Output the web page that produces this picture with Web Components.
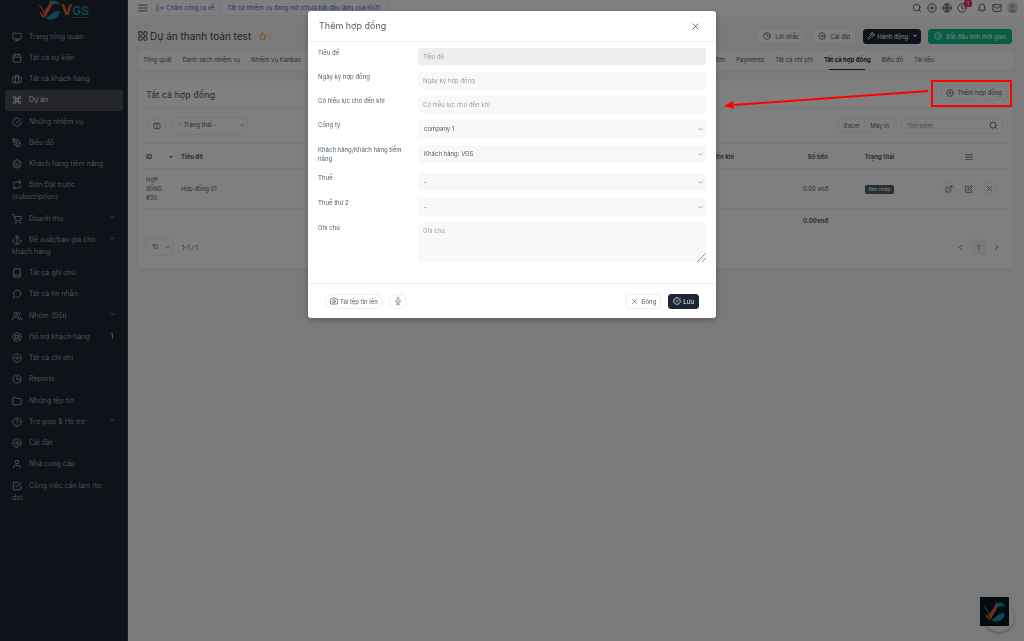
<!DOCTYPE html>
<html lang="vi">
<head>
<meta charset="utf-8">
<title>Dự án thanh toán test</title>
<style>
html,body{margin:0;height:100%}
body{font:6px/9px Inter,"Liberation Sans",sans-serif;color:#4e5e6a;background:#f5f5f5;overflow:hidden}
</style>
</head>
<body>
<crm-app></crm-app>
<script>
const P = (...d) => d.map(x => `<path d="${x}"/>`).join('');
const C = (x, y, r) => `<circle cx="${x}" cy="${y}" r="${r}"/>`;
const R = (x, y, w, h, r) => `<rect x="${x}" y="${y}" width="${w}" height="${h}" rx="${r}"/>`;
const ICONS = {
  monitor: R(2,3,20,14,2) + P('M8 21h8M12 17v4'),
  calendar: R(3,4,18,18,2) + P('M16 2v4M8 2v4M3 10h18'),
  briefcase: R(2,7,20,14,2) + P('M16 21V5a2 2 0 0 0-2-2h-4a2 2 0 0 0-2 2v16'),
  command: P('M18 3a3 3 0 0 0-3 3v12a3 3 0 1 0 3-3H6a3 3 0 1 0 3 3V6a3 3 0 1 0-3 3h12a3 3 0 1 0 0-6z'),
  checkCircle: P('M22 11.08V12a10 10 0 1 1-5.93-9.14', 'M22 4L12 14.01l-3-3'),
  pen: P('M12 19l7-7 3 3-7 7-3-3z', 'M18 13l-1.5-7.5L2 2l3.5 14.5L13 18l5-5z', 'M2 2l7.586 7.586') + C(11,11,2),
  layers: P('M12 2L2 7l10 5 10-5-10-5z', 'M2 17l10 5 10-5', 'M2 12l10 5 10-5'),
  repeat: P('M17 1l4 4-4 4', 'M3 11V9a4 4 0 0 1 4-4h14', 'M7 23l-4-4 4-4', 'M21 13v2a4 4 0 0 1-4 4H3'),
  cart: C(9,21,1) + C(20,21,1) + P('M1 1h4l2.68 13.39a2 2 0 0 0 2 1.61h9.72a2 2 0 0 0 2-1.61L23 6H6'),
  anchor: C(12,5,3) + P('M12 22V8', 'M5 12H2a10 10 0 0 0 20 0h-3'),
  book: P('M4 19.5A2.5 2.5 0 0 1 6.5 17H20', 'M6.5 2H20v20H6.5A2.5 2.5 0 0 1 4 19.5v-15A2.5 2.5 0 0 1 6.5 2z'),
  message: P('M21 11.5a8.38 8.38 0 0 1-.9 3.8 8.5 8.5 0 0 1-7.6 4.7 8.38 8.38 0 0 1-3.8-.9L3 21l1.9-5.7a8.38 8.38 0 0 1-.9-3.8 8.5 8.5 0 0 1 4.7-7.6 8.38 8.38 0 0 1 3.8-.9h.5a8.48 8.48 0 0 1 8 8v.5z'),
  users: P('M17 21v-2a4 4 0 0 0-4-4H5a4 4 0 0 0-4 4v2', 'M23 21v-2a4 4 0 0 0-3-3.87', 'M16 3.13a4 4 0 0 1 0 7.75') + C(9,7,4),
  buoy: C(12,12,10) + C(12,12,4) + P('M4.93 4.93l4.24 4.24M14.83 14.83l4.24 4.24M14.83 9.17l4.24-4.24M4.93 19.07l4.24-4.24'),
  arrowCircle: C(12,12,10) + P('M12 16l4-4-4-4M8 12h8'),
  pie: P('M21.21 15.89A10 10 0 1 1 8 2.83', 'M22 12A10 10 0 0 0 12 2v10z'),
  folder: P('M22 19a2 2 0 0 1-2 2H4a2 2 0 0 1-2-2V5a2 2 0 0 1 2-2h5l2 3h9a2 2 0 0 1 2 2z'),
  help: C(12,12,10) + P('M9.09 9a3 3 0 0 1 5.83 1c0 2-3 3-3 3M12 17h.01'),
  settings: C(12,12,3) + P('M19.4 15a1.65 1.65 0 0 0 .33 1.82l.06.06a2 2 0 1 1-2.83 2.83l-.06-.06a1.65 1.65 0 0 0-1.82-.33 1.65 1.65 0 0 0-1 1.51V21a2 2 0 0 1-4 0v-.09A1.65 1.65 0 0 0 9 19.4a1.65 1.65 0 0 0-1.82.33l-.06.06a2 2 0 1 1-2.83-2.83l.06-.06a1.65 1.65 0 0 0 .33-1.82 1.65 1.65 0 0 0-1.51-1H3a2 2 0 0 1 0-4h.09A1.65 1.65 0 0 0 4.6 9a1.65 1.65 0 0 0-.33-1.82l-.06-.06a2 2 0 1 1 2.83-2.83l.06.06a1.65 1.65 0 0 0 1.82.33H9a1.65 1.65 0 0 0 1-1.51V3a2 2 0 0 1 4 0v.09a1.65 1.65 0 0 0 1 1.51 1.65 1.65 0 0 0 1.82-.33l.06-.06a2 2 0 1 1 2.83 2.83l-.06.06a1.65 1.65 0 0 0-.33 1.82V9a1.65 1.65 0 0 0 1.51 1H21a2 2 0 0 1 0 4h-.09a1.65 1.65 0 0 0-1.51 1z'),
  user: P('M20 21v-2a4 4 0 0 0-4-4H8a4 4 0 0 0-4 4v2') + C(12,7,4),
  checkSquare: P('M9 11l3 3L22 4', 'M21 12v7a2 2 0 0 1-2 2H5a2 2 0 0 1-2-2V5a2 2 0 0 1 2-2h11'),
  down: P('M5 8l7 7 7-7'),
  left: P('M15 5l-7 7 7 7'),
  right: P('M9 5l7 7-7 7'),
  menu: P('M2 5h20M2 12h20M2 19h20'),
  logout: P('M8 3H6a3 3 0 0 0-3 3v12a3 3 0 0 0 3 3h2', 'M9 12h13M17 7l5 5-5 5'),
  grid: R(2,2,8,8,1) + R(14,2,8,8,1) + R(14,14,8,8,1) + R(2,14,8,8,1),
  star: P('M12 2l3.09 6.26L22 9.27l-5 4.87 1.18 6.88L12 17.77l-6.18 3.25L7 14.14 2 9.27l6.91-1.01z'),
  search: C(11,11,8) + P('M21 21l-4.35-4.35'),
  plus: C(12,12,10) + P('M12 8v8M8 12h8'),
  globe: C(12,12,10) + P('M2 12h20M12 2a15 15 0 0 1 4 10 15 15 0 0 1-4 10 15 15 0 0 1-4-10 15 15 0 0 1 4-10zM12 2v20'),
  clock: C(12,12,10) + P('M12 6v6l4 2'),
  bell: P('M18 8A6 6 0 0 0 6 8c0 7-3 9-3 9h18s-3-2-3-9', 'M13.73 21a2 2 0 0 1-3.46 0'),
  mail: R(2,4,20,16,2) + P('M22 6l-10 7L2 6'),
  tool: P('M14.7 6.3a1 1 0 0 0 0 1.4l1.6 1.6a1 1 0 0 0 1.4 0l3.77-3.77a6 6 0 0 1-7.94 7.94l-6.91 6.91a2.12 2.12 0 0 1-3-3l6.91-6.91a6 6 0 0 1 7.94-7.94l-3.76 3.76z'),
  columns: R(3,4,18,16,2) + P('M12 4v16'),
  external: P('M18 13v6a2 2 0 0 1-2 2H5a2 2 0 0 1-2-2V8a2 2 0 0 1 2-2h6M15 3h6v6M10 14L21 3'),
  edit: P('M11 4H4a2 2 0 0 0-2 2v14a2 2 0 0 0 2 2h14a2 2 0 0 0 2-2v-7', 'M18.5 2.5a2.12 2.12 0 0 1 3 3L12 15l-4 1 1-4z'),
  close: P('M19 5L5 19M5 5l14 14'),
  camera: P('M23 19a2 2 0 0 1-2 2H3a2 2 0 0 1-2-2V8a2 2 0 0 1 2-2h4l2-3h6l2 3h4a2 2 0 0 1 2 2z') + C(12,13,4),
  mic: P('M12 1a3 3 0 0 0-3 3v8a3 3 0 0 0 6 0V4a3 3 0 0 0-3-3z', 'M19 10v2a7 7 0 0 1-14 0v-2M12 19v4M8 23h8')
};

function define(name, css, html) {
  customElements.define(name, class extends HTMLElement {
    constructor() {
      super();
      const tpl = document.createElement('template');
      tpl.innerHTML = `<style>*{box-sizing:border-box}${css}</style>` + (typeof html === 'function' ? html(this) : html);
      this.attachShadow({ mode: 'open' }).append(tpl.content.cloneNode(true));
    }
  });
}

customElements.define('app-icon', class extends HTMLElement {
  connectedCallback() {
    if (this.shadowRoot) return;
    const s = this.getAttribute('size') || 10;
    this.attachShadow({ mode: 'open' }).innerHTML =
      `<style>:host{display:inline-block;flex:none;width:${s}px;height:${s}px;vertical-align:middle}
       svg{display:block;overflow:visible;fill:none;stroke:currentColor;stroke-linecap:round;stroke-linejoin:round}</style>
       <svg width="${s}" height="${s}" viewBox="0 0 24 24" stroke-width="${this.getAttribute('weight') || 2.3}" aria-hidden="true">${ICONS[this.getAttribute('name')]}</svg>`;
  }
});

const BIRD = `<g><path fill="#e8602c" d="M0 7c3 1 5 3 7 8l2 3c0-6 7-7 8-18 3 8 1 13-3 17-2 3-3 6-5 9-1-8-4-14-9-19zM3 17c3 2 4 4 5 9-3-2-5-5-5-9z"/>
<path fill="#2a86ac" d="M18 3c4-3 10-1 12 5-5-2-9-2-12 1zM11 25c5-1 7-9 18-9 1 7-6 12-12 12-3 0-5-1-6-3z"/></g>`;

define('app-logo', `:host{display:flex;align-items:center;justify-content:center;gap:1px;height:18px}
  svg{display:block}
  .word{display:flex;flex-direction:column;padding-top:3px;font-size:12px;line-height:12px;font-weight:600;color:#2a86ac}
  .word b{color:#e8602c;font-size:15px;font-weight:700}
  i{display:block;height:1px;background:#8c4a36;margin-left:10px}`,
  `<svg width="22" height="21" viewBox="0 0 30 28">${BIRD}</svg><div class="word"><span><b>V</b>GS</span><i></i></div>`);

define('side-item', `:host{display:block}
  a{display:grid;grid-template-columns:1fr auto;padding:4px 7px 5px;border-radius:2px;color:#9b9fa5;text-decoration:none;font-size:7px;line-height:12px}
  :host([active]) a{background:#494d56;color:#e6e7e9}
  app-icon{margin-right:7px}
  em{font-style:normal;min-width:8px;text-align:center;color:#d5d7da}
  em app-icon{margin:0 0 4px}`,
  el => `<a href="#"><span><app-icon name="${el.getAttribute('icon')}"></app-icon><slot></slot></span><em>${el.hasAttribute('expand') ? '<app-icon name="down" size="5" weight="3"></app-icon>' : (el.getAttribute('count') || '')}</em></a>`);

const MENU = [['monitor','Trang tổng quan'],['calendar','Tất cả sự kiện'],['briefcase','Tất cả khách hàng'],['command','Dự án','active'],
  ['checkCircle','Những nhiệm vụ'],['pen','Biểu đồ'],['layers','Khách hàng tiềm năng'],['repeat','Đơn Đặt trước (subscription)'],
  ['cart','Doanh thu','expand'],['anchor','Đề xuất/báo giá cho khách hàng','expand'],['book','Tất cả ghi chú'],['message','Tất cả tin nhắn'],
  ['users','Nhóm (Đội)','expand'],['buoy','Hỗ trợ khách hàng','count="1"'],['arrowCircle','Tất cả chi phí'],['pie','Reports'],
  ['folder','Những tệp tin'],['help','Trợ giúp &amp; Hỗ trợ','expand'],['settings','Cài đặt'],['user','Nhà cung cấp'],['checkSquare','Công việc cần làm (to do)']];

define('app-sidebar', `:host{display:block;background:#1b2633;border-right:1px solid #39424e}
  header{border-bottom:1px solid #15202b}
  ul{list-style:none;margin:0;padding:8px 4px 0 5px}
  li:nth-child(4n){margin-bottom:1px}`,
  `<header><app-logo></app-logo></header><nav><ul>${MENU.map(([i,t,a='']) => `<li><side-item icon="${i}" ${a}>${t}</side-item></li>`).join('')}</ul></nav>`);

define('top-bar', `:host{display:flex;align-items:center;height:18px;padding:0 6px 2px 10px;background:#fff;border-bottom:1px solid #eee}
  a{display:flex;align-items:center;gap:2px;height:20px;margin-top:-3px;padding:3px 5px 0;border:1px solid #eef0f2;border-radius:3px;color:#4a6cd8;text-decoration:none}
  a:first-of-type{margin-left:3px;padding:3px 4px 0}
  a+a{padding:3px 7px 0 6px;margin-left:1px}
  .tools{display:flex;align-items:center;gap:5px;margin-left:auto}
  .bell{display:flex;position:relative;margin-right:5px}
  b{position:absolute;left:7px;top:-3px;width:8px;height:7px;border-radius:2px;background:#ef2d5e;color:#fff;font-size:6px;line-height:7px;text-align:center;font-weight:400}
  .me{display:block;width:11px;height:11px;border-radius:50%}`,
  `<app-icon name="menu" size="10"></app-icon>
   <a href="#"><app-icon name="logout" size="8"></app-icon>Chấm công ra về</a>
   <a href="#">Tất cả nhiệm vụ đang mở (chưa bắt đầu làm) của tôi31</a>
   <div class="tools"><app-icon name="search"></app-icon><app-icon name="plus"></app-icon><app-icon name="globe"></app-icon>
   <span class="bell"><app-icon name="clock"></app-icon><b>1</b></span><app-icon name="bell"></app-icon><app-icon name="mail"></app-icon>
   <svg class="me" viewBox="0 0 12 12"><rect width="12" height="12" fill="#d5d8dc"/><circle cx="6" cy="4.500" r="2.400" fill="#a9adb4"/><path d="M1 12c0-6 10-6 10 0z" fill="#a9adb4"/></svg></div>`);

define('ui-button', `:host{display:block}
  button{display:flex;width:100%;align-items:center;justify-content:center;gap:var(--gap,3px);height:15px;padding:0 var(--pad,4px);border:1px solid #eceef0;border-radius:3px;background:#fff;color:#4e5e6a;font:inherit;white-space:nowrap}
  :host([dark]) button{background:#1d2636;border-color:#1d2636;color:#fff}
  :host([green]) button{background:#0abb87;border-color:#0abb87;color:#fff}
  :host([round]) button{border-radius:8px}`,
  `<button type="button"><slot></slot></button>`);

define('project-head', `:host{display:block}
  .title{display:flex;align-items:center;gap:7px;height:33px;padding:3px 1px 0 0}
  h1{display:flex;align-items:center;gap:2px;margin:0 auto 0 0;font-size:10px;line-height:14px;font-weight:400;color:#3c4a56}
  h1 .s{color:#f0a020;margin-left:5px}
  ui-button{--gap:4px;--pad:5px}
  ui-button[dark]{--gap:2px;--pad:3px}
  nav{display:flex;gap:11px;height:19px;padding:0 5px;background:#fff;border-radius:3px}
  nav a{color:inherit;text-decoration:none;line-height:18px;white-space:nowrap}
  nav .more{margin-left:auto}
  nav a:last-child{margin-right:74px}
  nav a[aria-current]{color:#1d2636;font-weight:700;background:linear-gradient(#1d2636,#1d2636) center bottom/36px 1px no-repeat}
  .caret{border:2px solid transparent;border-top-color:#fff;margin:2px 0 0 3px}`,
  `<div class="title"><h1><app-icon name="grid"></app-icon>Dự án thanh toán test<app-icon class="s" name="star" size="9"></app-icon></h1>
   <ui-button><app-icon name="clock" size="8"></app-icon>Lời nhắc</ui-button><ui-button><app-icon name="settings" size="8"></app-icon>Cài đặt</ui-button>
   <ui-button dark><app-icon name="tool" size="8"></app-icon>Hành động<span class="caret"></span></ui-button>
   <ui-button green><app-icon name="clock" size="8"></app-icon>Bắt đầu tính thời gian</ui-button></div>
   <nav><a href="#">Tổng quát</a><a href="#">Danh sách nhiệm vụ</a><a href="#">Nhiệm vụ Kanban</a><a class="more" href="#">Hóa đơn</a><a href="#">Payments</a><a href="#">Tất cả chi phí</a><a href="#" aria-current="page">Tất cả hợp đồng</a><a href="#">Biểu đồ</a><a href="#">Tài liệu</a></nav>`);

define('ui-select', `:host{display:grid;align-items:center}
  select,app-icon{grid-area:1/1}
  select{appearance:none;width:100%;height:var(--h,18px);margin:0;padding:0 6px 2px;border:var(--line,0);border-radius:3px;background:var(--fill,#f8f8f8);color:#4e5e6a;font:inherit}
  app-icon{justify-self:end;margin-right:3px;pointer-events:none;color:#8088a8}`,
  el => `<select id="${el.id}-field" aria-label="${el.getAttribute('label')}"><option>${el.getAttribute('value')}</option></select><app-icon name="down" size="5" weight="4"></app-icon>`);

define('contract-list', `:host{display:block;background:#fff;border-radius:3px;box-shadow:0 1px 2px #0001}
  header{display:flex;align-items:center;justify-content:space-between;height:27px;padding:0 6px 0 8px;border-bottom:1px solid #f0f0f0}
  header ui-button{margin-bottom:3px}
  h2{margin:0;padding-top:2px;font-size:9px;line-height:12px;font-weight:400}
  .bar{display:flex;align-items:center;gap:6px;height:35px;padding:0 10px}
  .bar ui-select{width:76px;--h:18px;--line:1px solid #eceef0;--fill:#fff}
  .exp{display:flex;margin-left:auto}
  .exp ui-button{--pad:5px}
  .exp ui-button+ui-button{margin-left:-1px}
  .find{display:flex;align-items:center;width:102px;height:16px;padding:0 4px 0 5px;border:1px solid #eceef0;border-radius:3px}
  .find input{flex:1;min-width:0;padding:0;border:0;background:none;font:inherit;outline:0}
  .find input::placeholder{color:#8b959d}
  table{width:100%;border-collapse:collapse;table-layout:fixed}
  th,td{padding:0 8px;text-align:left;border-top:1px solid #f0f0f0}
  th:last-child,td:last-child{padding-right:6px}
  th{font-weight:700}
  thead tr{height:25px}tbody tr{height:40px}tfoot tr{height:24px}
  .c{text-align:center}.r{text-align:right}
  .tag{display:inline-block;padding:0 3px;border-radius:2px;background:#4e5e6a;color:#fff;font-size:5px;line-height:9px}
  .acts{display:flex;justify-content:center;gap:7px}
  .acts button{display:grid;place-items:center;width:13px;height:13px;padding:0;border:1px solid #eceef0;border-radius:50%;background:none;color:inherit}
  .sort{float:right;border:2px solid transparent;border-top-color:#4e5e6a;margin:4px -8px 0 0}
  footer{display:flex;align-items:center;height:35px;padding:0 9px 6px 7px;gap:9px}
  footer ui-select{width:28px;--h:18px;--line:1px solid #eceef0;--fill:#fff}
  .pages{display:flex;align-items:center;gap:3px;margin-left:auto}
  .pages button{display:grid;place-items:center;width:15px;height:16px;padding:0;border:0;border-radius:3px;background:none;color:inherit;font:inherit}
  .pages button:nth-child(2){background:#f5f5f5}`,
  `<header><h2>Tất cả hợp đồng</h2><ui-button><app-icon name="plus" size="8"></app-icon>Thêm hợp đồng</ui-button></header>
   <div class="bar"><ui-button><app-icon name="columns" size="8"></app-icon></ui-button><ui-select id="state" label="Trạng thái" value="- Trạng thái -"></ui-select>
   <div class="exp"><ui-button>Excel</ui-button><ui-button>Máy in</ui-button></div>
   <label class="find"><input type="search" placeholder="Tìm kiếm"><app-icon name="search" size="9"></app-icon></label></div>
   <table><colgroup><col style="width:35px"><col><col style="width:200px"><col style="width:94px"><col style="width:87px"><col style="width:90px"></colgroup>
   <thead><tr><th>ID<span class="sort"></span></th><th>Tiêu đề</th><th class="r">Có hiệu lực cho đến khi</th><th class="r">Số tiền</th><th class="c">Trạng thái</th><th class="c"><app-icon name="menu" size="8"></app-icon></th></tr></thead>
   <tbody><tr><td>HợP đồNG #30</td><td>Hợp đồng 01</td><td></td><td class="r">0.00 vnđ</td><td class="c"><span class="tag">Bản nháp</span></td>
   <td><div class="acts"><button aria-label="Mở"><app-icon name="external" size="8"></app-icon></button><button aria-label="Sửa"><app-icon name="edit" size="8"></app-icon></button><button aria-label="Xóa"><app-icon name="close" size="7"></app-icon></button></div></td></tr></tbody>
   <tfoot><tr><th></th><th></th><th></th><th class="r">0.00vnđ</th><th></th><th></th></tr></tfoot></table>
   <footer><ui-select id="size" label="Số dòng" value="10"></ui-select><span>1-1 / 1</span><div class="pages"><button aria-label="Trang trước"><app-icon name="left" size="7" weight="3"></app-icon></button><button>1</button><button aria-label="Trang sau"><app-icon name="right" size="7" weight="3"></app-icon></button></div></footer>`);

define('chat-bubble', `:host{display:block;position:fixed;right:10px;bottom:9px;width:34px;height:35px}
  i{position:absolute;right:0;bottom:0;width:30px;height:30px;border-radius:50%;background:#f4f4f4;box-shadow:0 1px 3px #0005}
  svg{position:relative;display:block;background:#00191e}`,
  `<i></i><svg width="29" height="29" viewBox="-5 -4 40 36">${BIRD}</svg>`);

define('contract-dialog', `:host{display:block;width:408px;background:#fff;border-radius:3px;box-shadow:0 2px 6px #0004}
  header,footer{display:flex;align-items:center}
  header{justify-content:space-between;height:31px;padding:0 16px 0 11px;border-bottom:1px solid #f0f0f0}
  h2{margin:0;font-size:9px;line-height:12px;font-weight:400}
  header button{display:grid;padding:0;border:0;background:none;color:#4e5e6a}
  form{display:grid;grid-template-columns:90px 1fr;column-gap:10px;row-gap:7px;align-items:start;padding:6px 10px 21px 10px}
  label{padding-bottom:3px}
  input,textarea{display:block;width:100%;margin:0;padding:0 5px;border:0;border-radius:3px;background:#f8f8f8;color:#4e5e6a;font:inherit}
  input{height:17px}
  input:first-of-type{background:#eee}
  textarea{height:39px;padding:3px 5px}
  textarea::-webkit-resizer{background:linear-gradient(135deg,transparent 68%,#999 68%,#999 73%,transparent 73%,transparent 84%,#999 84%,#999 89%,transparent 89%)}
  ::placeholder{color:#9a9ea2;opacity:1}
  footer{gap:6px;height:35px;padding:0 17px;border-top:1px solid #f0f0f0}
  .end{display:flex;gap:7px;margin-left:auto}
  .mic app-icon{color:#8088a8}`,
  `<header><h2>Thêm hợp đồng</h2><button type="button" aria-label="Đóng hộp thoại"><app-icon name="close" size="9"></app-icon></button></header>
   <form><label for="t">Tiêu đề</label><input id="t" placeholder="Tiêu đề">
   <label for="d">Ngày ký hợp đồng</label><input id="d" placeholder="Ngày ký hợp đồng">
   <label for="v">Có hiệu lực cho đến khi</label><input id="v" placeholder="Có hiệu lực cho đến khi">
   <label>Công ty</label><ui-select id="co" label="Công ty" value="company 1"></ui-select>
   <label>Khách hàng/Khách hàng tiềm năng</label><ui-select id="cl" label="Khách hàng/Khách hàng tiềm năng" value="Khách hàng: VGS"></ui-select>
   <label>Thuế</label><ui-select id="t1" label="Thuế" value="-"></ui-select>
   <label>Thuế thứ 2</label><ui-select id="t2" label="Thuế thứ 2" value="-"></ui-select>
   <label for="n">Ghi chú</label><textarea id="n" placeholder="Ghi chú"></textarea></form>
   <footer><ui-button round style="--gap:2px"><app-icon name="camera" size="8"></app-icon>Tải tệp tin lên</ui-button><ui-button class="mic" round aria-label="Ghi âm"><app-icon name="mic" size="8"></app-icon></ui-button>
   <div class="end"><ui-button><app-icon name="close" size="7"></app-icon>Đóng</ui-button><ui-button dark style="--gap:2px"><app-icon name="checkCircle" size="8"></app-icon>Lưu</ui-button></div></footer>`);

define('callout-mark', `:host{position:absolute;right:12px;top:79px;width:288px;height:31px;pointer-events:none}
  svg{display:block}`,
  `<svg width="288" height="31" fill="none" stroke="#f00" stroke-width="2"><rect x="208" y="2" width="79" height="25"/><path d="M204 12L10 26"/><path d="M0 27l9-5 1 8z" fill="#f00" stroke="none"/></svg>`);

define('crm-app', `:host{display:grid;grid-template-columns:128px 1fr;min-height:100vh;position:relative}
  main{padding:0 11px 0 10px}
  contract-list{margin-top:11px}
  .veil{position:absolute;inset:0;display:flex;justify-content:center;align-items:flex-start;padding-top:11px;background:#00000080}`,
  `<app-sidebar></app-sidebar><div><top-bar></top-bar><main><project-head></project-head><contract-list></contract-list></main></div>
   <chat-bubble></chat-bubble><div class="veil"><contract-dialog></contract-dialog></div><callout-mark></callout-mark>`);
</script>
</body>
</html>
